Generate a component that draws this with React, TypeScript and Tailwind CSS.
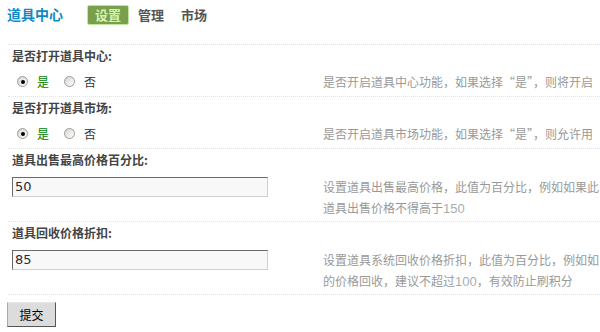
import React from "react";

const cjk = { fontFamily: '"Noto Sans CJK SC", "Noto Sans", sans-serif' };

function Radio({ checked }: { checked?: boolean }) {
  return (
    <span className="inline-flex h-[11px] w-[11px] items-center justify-center rounded-full border border-[#9a9a9a] bg-gradient-to-br from-[#d6d6ce] to-[#ffffff]">
      {checked && <span className="block h-[4px] w-[4px] rounded-full bg-black" />}
    </span>
  );
}

function Num({ children }: { children: React.ReactNode }) {
  return (
    <span className="text-[13px] text-[#a8adb4]" style={{ fontFamily: '"Liberation Sans", sans-serif' }}>
      {children}
    </span>
  );
}

function BoolBlock({ label, desc }: { label: string; desc: React.ReactNode }) {
  return (
    <div className="border-t border-dotted border-[#cde8f6]">
      <div className="flex h-[22px] items-center pl-[4px] text-[12px] font-bold text-[#444]">{label}</div>
      <div className="flex h-[29px] items-center">
        <div className="flex w-[315px] shrink-0 items-center pl-[9px] text-[12px]">
          <Radio checked />
          <span className="ml-[9px] text-[#008000]">是</span>
          <span className="ml-[15px]">
            <Radio />
          </span>
          <span className="ml-[9px] text-[#333]">否</span>
        </div>
        <div className="min-w-0 flex-1 overflow-hidden whitespace-nowrap text-[12px] text-[#999]">{desc}</div>
      </div>
    </div>
  );
}

function InputBlock({ label, value, lines }: { label: string; value: string; lines: React.ReactNode[] }) {
  return (
    <div className="border-t border-dotted border-[#cde8f6]">
      <div className="flex h-[22px] items-center pl-[4px] text-[12px] font-bold text-[#444]">{label}</div>
      <div className="flex h-[50px]">
        <div className="w-[315px] shrink-0 pl-[4px] pt-[6px]">
          <div
            className="flex h-[20px] w-[256px] items-center border border-t-[#6a6a6a] border-l-[#6a6a6a] border-b-[#cfcfcf] border-r-[#cfcfcf] bg-[#f8f8f8] pl-[2px] text-[13px] text-[#2a2a3a]"
            style={{ fontFamily: '"DejaVu Sans", sans-serif' }}
          >
            {value}
          </div>
        </div>
        <div className="min-w-0 flex-1 overflow-hidden whitespace-nowrap pt-[5px] text-[12px] leading-[21px] text-[#999]">
          {lines.map((l, i) => (
            <div key={i}>{l}</div>
          ))}
        </div>
      </div>
    </div>
  );
}

export default function App() {
  return (
    <div className="h-[332px] w-[600px] overflow-hidden bg-white" style={cjk}>
      <div className="flex h-[44px] items-start pt-[5px]">
        <div className="-mt-[1px] ml-[7px] text-[14px] font-bold leading-[20px] text-[#0d8ac6]">道具中心</div>
        <div className="ml-[24px] flex h-[20px] items-center rounded-[2px] border border-[#c2e69c] bg-[#78a04c] px-[7px] text-[13px] font-bold text-[#d6f1b3]">
          设置
        </div>
        <div className="ml-[9px] flex h-[20px] items-center text-[13px] font-bold text-[#555]">管理</div>
        <div className="ml-[17px] flex h-[20px] items-center text-[13px] font-bold text-[#555]">市场</div>
      </div>
      <div className="pl-[8px]">
        <BoolBlock label="是否打开道具中心:" desc="是否开启道具中心功能，如果选择“是”，则将开启" />
        <BoolBlock label="是否打开道具市场:" desc="是否开启道具市场功能，如果选择“是”，则允许用" />
        <InputBlock
          label="道具出售最高价格百分比:"
          value="50"
          lines={[<>设置道具出售最高价格，此值为百分比，例如如果此</>, <>道具出售价格不得高于<Num>150</Num></>]}
        />
        <InputBlock
          label="道具回收价格折扣:"
          value="85"
          lines={[
            <>设置道具系统回收价格折扣，此值为百分比，例如如</>,
            <>的价格回收，建议不超过<Num>100</Num>，有效防止刷积分</>,
          ]}
        />
        <div className="border-t border-dotted border-[#cde8f6]" />
      </div>
      <div className="pl-[7px] pt-[7px]">
        <button className="flex h-[25px] w-[49px] items-center justify-center border border-t-[#e6e6e6] border-l-[#aaaaaa] border-r-[#555] border-b-[#555] bg-[#dcdcdc] text-[12px] text-black">
          提交
        </button>
      </div>
    </div>
  );
}
